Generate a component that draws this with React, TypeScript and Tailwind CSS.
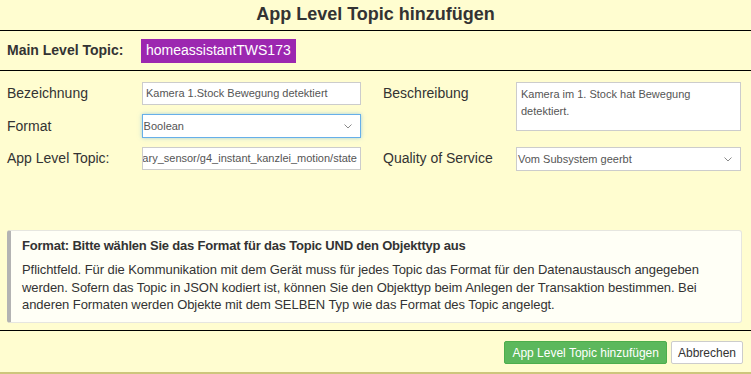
import React from "react";

function Chevron() {
  return (
    <svg width="8" height="5" viewBox="0 0 8 5" className="shrink-0">
      <path d="M0.5 0.5 L4 4 L7.5 0.5" fill="none" stroke="#8a8a8a" strokeWidth="1" />
    </svg>
  );
}

export default function App() {
  const font = { fontFamily: '"Liberation Sans", Arial, sans-serif' };
  return (
    <div className="w-[751px] h-[374px] bg-[#fffdd0] text-[#333] flex flex-col overflow-hidden" style={font}>
      <div className="h-[31px] shrink-0 flex items-center justify-center border-b border-black text-[18px] font-bold leading-none pb-[2px]">
        App Level Topic hinzufügen
      </div>
      <div className="h-[40px] shrink-0 flex items-center border-b border-black px-[7px]">
        <div className="w-[134px] text-[14px] font-bold">Main Level Topic:</div>
        <div className="h-[24px] bg-[#9c27b0] text-white text-[14px] flex items-center px-[5px]">homeassistantTWS173</div>
      </div>

      <div className="flex pt-[11px] px-[7px] shrink-0">
        <div className="flex flex-col gap-[9px] w-[354px]">
          <div className="flex items-center h-[23px]">
            <div className="w-[135px] text-[14px]">Bezeichnung</div>
            <div className="w-[219px] h-[23px] bg-white border border-[#ccc] text-[11px] text-[#555] flex items-center pl-[3px] whitespace-nowrap overflow-hidden">
              Kamera 1.Stock Bewegung detektiert
            </div>
          </div>
          <div className="flex items-center h-[24px]">
            <div className="w-[135px] text-[14px]">Format</div>
            <div className="w-[220px] h-[24px] bg-white border border-[#66afe9] shadow-[0_0_4px_rgba(102,175,233,0.6)] text-[11px] text-[#555] flex items-center justify-between pl-[1px] pr-[8px]">
              <span>Boolean</span>
              <Chevron />
            </div>
          </div>
          <div className="flex items-center h-[23px]">
            <div className="w-[135px] text-[14px]">App Level Topic:</div>
            <div className="w-[219px] h-[23px] bg-white border border-[#ccc] text-[11px] text-[#555] flex items-center justify-end pr-[3px] whitespace-nowrap overflow-hidden">
              <span>ary_sensor/g4_instant_kanzlei_motion/state</span>
            </div>
          </div>
        </div>
        <div className="flex flex-col gap-[16px] ml-[22px]">
          <div className="flex items-start">
            <div className="w-[133px] text-[14px] pt-[1px]">Beschreibung</div>
            <div className="w-[225px] h-[49px] bg-white border border-[#ccc] text-[11px] leading-[17px] text-[#555] pl-[4px] pt-[3px] pr-[4px]">
              Kamera im 1. Stock hat Bewegung
              <br />
              detektiert.
            </div>
          </div>
          <div className="flex items-center h-[24px]">
            <div className="w-[133px] text-[14px] pb-[1px]">Quality of Service</div>
            <div className="w-[225px] h-[24px] bg-white border border-[#ccc] text-[11px] text-[#555] flex items-center justify-between pl-[1px] pr-[8px]">
              <span>Vom Subsystem geerbt</span>
              <Chevron />
            </div>
          </div>
        </div>
      </div>

      <div className="mt-[59px] ml-[7px] mr-[9px] h-[93px] shrink-0 bg-[#fffff6] border border-[#e6e6e0] border-l-[4px] border-l-[#b3b3b3] rounded-[3px] pl-[11px] pr-[8px] pt-[6px]">
        <div className="text-[13px] font-bold leading-[18px] tracking-[-0.2px]">Format: Bitte wählen Sie das Format für das Topic UND den Objekttyp aus</div>
        <div className="text-[13px] leading-[17.5px] mt-[6px] tracking-[-0.07px]">
          Pflichtfeld. Für die Kommunikation mit dem Gerät muss für jedes Topic das Format für den Datenaustausch angegeben
          <br />
          werden. Sofern das Topic in JSON kodiert ist, können Sie den Objekttyp beim Anlegen der Transaktion bestimmen. Bei
          <br />
          anderen Formaten werden Objekte mit dem SELBEN Typ wie das Format des Topic angelegt.
        </div>
      </div>

      <div className="mt-[7px] border-t border-black flex-1 flex justify-end items-start gap-[4px] pt-[10px] pr-[8px] border-b-2 border-b-[#cdc67c]">
        <div className="h-[23px] px-[7px] bg-[#5cb85c] border border-[#4cae4c] text-white text-[12px] flex items-center rounded-[2px]">
          App Level Topic hinzufügen
        </div>
        <div className="h-[23px] px-[6px] bg-white border border-[#ccc] text-[#333] text-[12px] flex items-center rounded-[2px]">
          Abbrechen
        </div>
      </div>
    </div>
  );
}
